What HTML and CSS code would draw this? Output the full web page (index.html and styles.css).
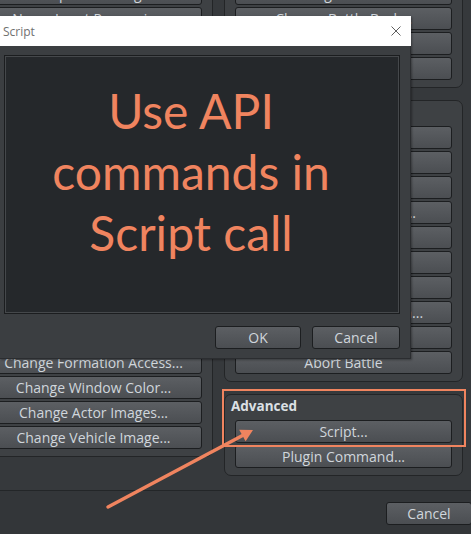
FILE: index.html
```html
<!DOCTYPE html>
<html>
<head>
<meta charset="utf-8">
<link rel="stylesheet" href="styles.css">
</head>
<body>
<div class="window">
  <div class="main">
    <div class="col">
      <section class="group">
        <div class="group-title">Scene Control</div>
        <div class="btn">Battle Processing...</div>
        <div class="btn">Shop Processing...</div>
        <div class="btn">Name Input Processing...</div>
        <div class="btn">Open Menu Screen</div>
        <div class="btn">Open Save Screen</div>
        <div class="btn">Game Over</div>
        <div class="btn">Return to Title Screen</div>
      </section>
      <section class="group">
        <div class="group-title">System Settings</div>
        <div class="btn">Change Battle BGM...</div>
        <div class="btn">Change Victory ME...</div>
        <div class="btn">Change Defeat ME...</div>
        <div class="btn">Change Vehicle BGM...</div>
        <div class="btn">Change Save Access...</div>
        <div class="btn">Change Menu Access...</div>
        <div class="btn">Change Encounter...</div>
        <div class="btn">Change Formation Access...</div>
        <div class="btn">Change Window Color...</div>
        <div class="btn">Change Actor Images...</div>
        <div class="btn">Change Vehicle Image...</div>
      </section>
    </div>
    <div class="col">
      <section class="group">
        <div class="group-title">Map</div>
        <div class="btn">Change Map Name Display...</div>
        <div class="btn">Change Tileset...</div>
        <div class="btn">Change Battle Back...</div>
        <div class="btn">Change Parallax...</div>
        <div class="btn">Get Location Info...</div>
      </section>
      <section class="group">
        <div class="group-title">Battle</div>
        <div class="btn">Change Enemy HP...</div>
        <div class="btn">Change Enemy MP...</div>
        <div class="btn">Change Enemy TP...</div>
        <div class="btn">Change Enemy State...</div>
        <div class="btn">Enemy Recover All...</div>
        <div class="btn">Enemy Appear...</div>
        <div class="btn">Enemy Transform...</div>
        <div class="btn">Show Battle Animation...</div>
        <div class="btn">Force Action...</div>
        <div class="btn">Abort Battle</div>
      </section>
      <section class="group">
        <div class="group-title">Advanced</div>
        <div class="btn">Script...</div>
        <div class="btn">Plugin Command...</div>
      </section>
    </div>
  </div>
  <div class="footer">
    <div class="btn footer-btn">Cancel</div>
  </div>

  <div class="dialog">
    <div class="titlebar">
      <span class="title">Script</span>
      <svg class="close" width="10" height="10" viewBox="0 0 10 10"><path d="M0.5 0.5 L9.5 9.5 M9.5 0.5 L0.5 9.5" stroke="#5f5f5f" stroke-width="1" fill="none"/></svg>
    </div>
    <div class="dialog-body">
      <div class="panel">Use API<br>commands in<br>Script call</div>
      <div class="dialog-actions">
        <div class="btn ok">OK</div>
        <div class="btn cancel">Cancel</div>
      </div>
    </div>
  </div>

  <div class="highlight"></div>
  <svg class="arrow" width="471" height="534" viewBox="0 0 471 534">
    <line x1="108" y1="507" x2="243" y2="435.3" stroke="#f0845f" stroke-width="3.5" stroke-linecap="round"/>
    <polygon points="253,430 245.6,441.2 239.2,429.8" fill="#f0845f"/>
  </svg>
</div>
</body>
</html>
```
FILE: styles.css
```css
* { box-sizing: border-box; }
html, body { margin: 0; padding: 0; }
body {
  background: #36393c;
  font-family: "Open Sans", "Liberation Sans", sans-serif;
  font-size: 14px;
  color: #d0d6dc;
}
.window {
  position: relative;
  width: 471px;
  height: 534px;
  overflow: hidden;
  background: #36393c;
}
.main {
  display: flex;
  gap: 11px;
  margin-left: -26px;
  margin-top: -69px;
  height: 560px;
  border-bottom: 1px solid #232628;
}
.col {
  display: flex;
  flex-direction: column;
  gap: 12px;
  width: 239px;
}
.group {
  display: flex;
  flex-direction: column;
  gap: 2px;
  border: 1px solid #232527;
  border-radius: 7px;
  background: #3e4144;
  padding: 2px 10px 7px;
}
.group-title {
  height: 18px;
  line-height: 18px;
  margin: 0 0 3px -4px;
  font-size: 13.5px;
  font-weight: bold;
  color: #dce0e4;
}
.btn {
  height: 23px;
  line-height: 21px;
  border: 1px solid #1c1e20;
  border-radius: 3px;
  background: linear-gradient(#5c5f63, #4b4e52);
  color: #d0d6dc;
  text-align: center;
  white-space: nowrap;
  overflow: hidden;
}
.footer {
  display: flex;
  justify-content: flex-end;
  padding-top: 11px;
  margin-right: -1px;
  background: #333639;
  height: 44px;
}
.footer-btn { width: 86px; }

.dialog {
  position: absolute;
  left: 0;
  top: 16px;
  width: 411px;
  box-shadow: 1px 1px 2px rgba(0,0,0,0.35);
}
.titlebar {
  height: 30px;
  background: #ffffff;
  display: flex;
  align-items: center;
  justify-content: space-between;
  padding: 0 10px 0 3px;
  font-size: 12px;
  color: #707070;
}
.close { display: block; }
.dialog-body {
  background: #3b3e41;
  padding: 9px 10px 9px 4px;
  border-right: 1px solid #2b2d30;
  border-bottom: 1px solid #2b2d30;
}
.panel {
  height: 259px;
  background: #25282b;
  border: 1px solid #1b1d1f;
  box-shadow: inset 0 0 0 1px #45484b;
  color: #f0845f;
  font-family: Lato, "Open Sans", sans-serif;
  font-size: 48px;
  line-height: 61px;
  text-align: center;
  padding: 24px 22px 0 0;
}
.dialog-actions {
  display: flex;
  justify-content: flex-end;
  gap: 11px;
  margin-top: 12px;
}
.ok { width: 86px; }
.cancel { width: 88px; }

.highlight {
  position: absolute;
  left: 222px;
  top: 389px;
  width: 244px;
  height: 58px;
  border: 2px solid #f0845f;
}
.arrow {
  position: absolute;
  left: 0;
  top: 0;
}
```
